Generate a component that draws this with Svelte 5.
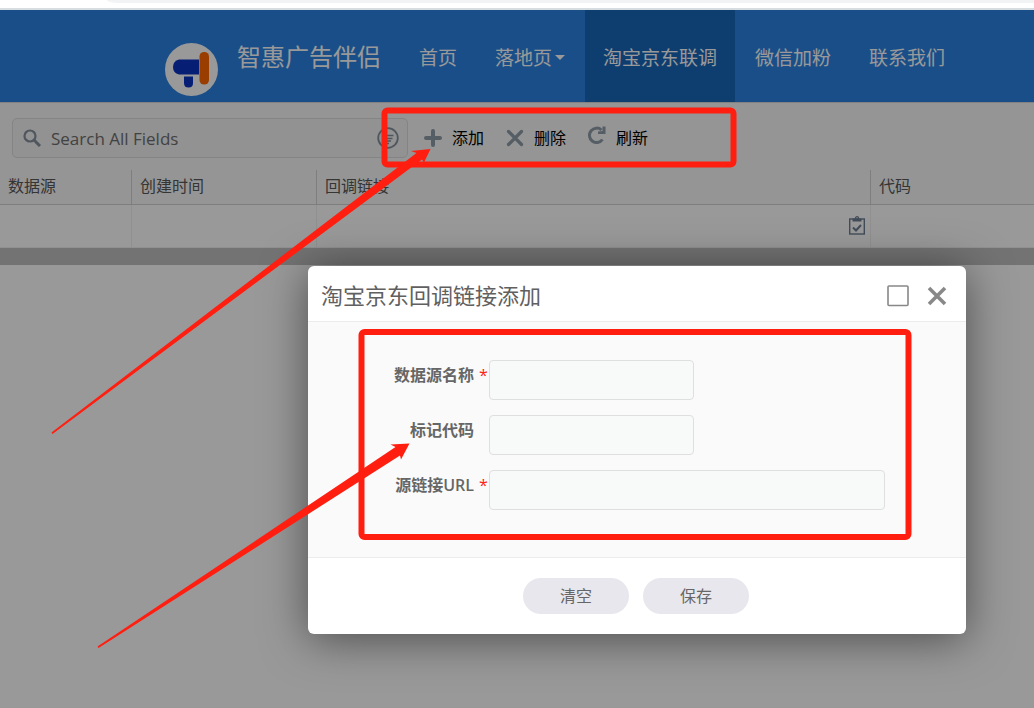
<script lang="ts">
  const links = [
    { text: '首页' },
    { text: '落地页', caret: true },
    { text: '淘宝京东联调', active: true },
    { text: '微信加粉' },
    { text: '联系我们' }
  ]

  const columns = ['数据源', '创建时间', '回调链接', '代码']

  const fields = [
    { id: 'source-name', label: '数据源名称', required: true },
    { id: 'mark-code', label: '标记代码' },
    { id: 'source-url', label: '源链接URL', required: true, wide: true }
  ]

  let values = $state<Record<string, string>>({ 'source-name': '', 'mark-code': '', 'source-url': '' })
  let search = $state('')

  function clear() {
    for (const field of fields) values[field.id] = ''
  }
</script>

<div class="screen">
  <div class="browser"><div class="address"></div></div>

  <div class="page">
    <header>
      <svg class="logo" viewBox="0 0 53 53" aria-hidden="true">
        <circle cx="26.500" cy="26.500" r="26.500" fill="#fff" />
        <path d="M34 16.500H14Q8 18 8 24Q8 30 14 31.500H34Z" fill="#0d33c4" />
        <path d="M19 33.500H28V40Q28 44.500 23.500 44.500Q19 44.500 19 40Z" fill="#0d33c4" />
        <rect x="34.500" y="9" width="9.500" height="32.500" rx="4.500" fill="#ff6600" />
      </svg>
      <h1>智惠广告伴侣</h1>
      <nav>
        {#each links as link}
          <a href="#top" class:active={link.active}>
            {link.text}{#if link.caret}<span class="caret"></span>{/if}
          </a>
        {/each}
      </nav>
    </header>

    <div class="toolbar">
      <div class="search">
        <svg width="18" height="18" viewBox="0 0 18 18" fill="none" stroke="#84909c"><circle cx="7" cy="7" r="5.500" stroke-width="2.200" /><path d="M11 11l6 6" stroke-width="3" /></svg>
        <input type="text" aria-label="Search All Fields" placeholder="Search All Fields" bind:value={search} />
        <svg width="22" height="22" viewBox="0 0 22 22" fill="none" stroke="#84909c" stroke-width="1.800"><circle cx="11" cy="11" r="9.800" /><path d="M5.500 8.500h11M7.500 11.500h8M9 14h5M10 16.500h2" stroke-width="1.500" /></svg>
      </div>
      <button type="button">
        <svg width="18" height="18" viewBox="0 0 18 18" fill="none" stroke="#8e9ba8" stroke-width="4" stroke-linecap="round"><path d="M9 2v14M2 9h14" /></svg>
        添加
      </button>
      <button type="button">
        <svg width="18" height="18" viewBox="0 0 18 18" fill="none" stroke="#8e9ba8" stroke-width="3.200" stroke-linecap="round"><path d="M2.500 2.500l13 13M15.500 2.500l-13 13" /></svg>
        删除
      </button>
      <button type="button">
        <svg class="refresh" width="18" height="18" viewBox="0 0 18 18"><path d="M14.500 13.500A7.200 7.200 0 1 1 13.500 4" fill="none" stroke="#8e9ba8" stroke-width="3" /><path d="M17.500 0.500V8H10V5.500L14.500 5V0.500Z" fill="#8e9ba8" /></svg>
        刷新
      </button>
    </div>

    <table>
      <colgroup><col class="c1" /><col class="c2" /><col class="c3" /><col /></colgroup>
      <thead>
        <tr>
          {#each columns as column}<th>{column}</th>{/each}
        </tr>
      </thead>
      <tbody>
        <tr>
          <td></td>
          <td></td>
          <td>
            <button type="button" class="copy" aria-label="复制">
              <svg width="16" height="19" viewBox="0 0 16 19" fill="none" stroke="#6f7f95"><rect x="0.700" y="3" width="14.600" height="15" stroke-width="1.400" /><path d="M3.500 2.500h9v3h-9z" fill="#6f7f95" stroke="none" /><circle cx="8" cy="2.200" r="1.500" stroke-width="1.300" /><path d="M4 11.500l3 3 5-5.500" stroke-width="2" /></svg>
            </button>
          </td>
          <td></td>
        </tr>
      </tbody>
    </table>
    <div class="scrollbar"></div>

    <div class="overlay">
      <div class="dialog" role="dialog" aria-labelledby="dialog-title">
        <div class="dialog-head">
          <h2 id="dialog-title">淘宝京东回调链接添加</h2>
          <button type="button" aria-label="最大化">
            <svg width="22" height="22" viewBox="0 0 22 22" fill="none" stroke="#888"><rect x="1" y="1" width="20" height="19.500" rx="1" stroke-width="1.600" /></svg>
          </button>
          <button type="button" aria-label="关闭">
            <svg width="20" height="20" viewBox="0 0 20 20" fill="none" stroke="#888" stroke-width="3.600"><path d="M2 2l16 16M18 2L2 18" /></svg>
          </button>
        </div>
        <form id="link-form">
          {#each fields as field}
            <div class="field">
              <label for={field.id}>{field.label}</label>
              <span class="star">{field.required ? '*' : ''}</span>
              <input type="text" id={field.id} class:wide={field.wide} bind:value={values[field.id]} />
            </div>
          {/each}
        </form>
        <div class="dialog-foot">
          <button type="button" onclick={clear}>清空</button>
          <button type="button">保存</button>
        </div>
      </div>
    </div>
  </div>

  <svg class="marks" aria-hidden="true">
    <g fill="none" stroke="#ff1e10" stroke-width="6">
      <rect x="384.500" y="110.500" width="349" height="54" rx="3" />
      <rect x="361.500" y="332" width="547" height="205" rx="3" />
    </g>
    <g fill="#ff1e10">
      <path d="M51.500 432.500L416.500 153L411 151L430.500 149L424 162.500L422 159.500L52.500 434Z" />
      <path d="M97.500 646.500L395.500 447L390.500 444.500L409.500 443.500L401 459.500L400 455.500L98.500 648Z" />
    </g>
  </svg>
</div>

<style>
  :global(body) {
    margin: 0;
    background: #fff;
  }

  .screen {
    position: relative;
    display: flex;
    flex-direction: column;
    min-height: 100vh;
    overflow: hidden;
    font-family: 'Open Sans', 'Noto Sans CJK SC', sans-serif;
    font-size: 16px;
  }

  button,
  input {
    font: inherit;
    box-sizing: border-box;
  }

  button {
    border: 0;
    padding: 0;
    background: none;
    cursor: pointer;
  }

  svg {
    display: block;
    flex: none;
  }

  .browser {
    height: 8px;
    border-bottom: 2px solid #d6dee1;
  }

  .address {
    height: 3px;
    margin-left: 107px;
    background: #f1f3f4;
    border-bottom-left-radius: 12px 3px;
  }

  .page {
    position: relative;
    flex: 1;
  }

  header {
    display: flex;
    height: 92px;
    padding-left: 165px;
    background: #2b83e4;
    color: #fff;
  }

  .logo {
    width: 53px;
    height: 53px;
    margin-top: 33px;
  }

  h1 {
    width: 164px;
    margin: 0 0 0 19px;
    font-size: 24px;
    font-weight: 400;
    line-height: 94px;
    white-space: nowrap;
  }

  nav {
    display: flex;
    gap: 2px;
  }

  nav a {
    display: flex;
    align-items: center;
    box-sizing: border-box;
    height: 92px;
    padding: 2px 18px 0;
    color: #fff;
    font-size: 19px;
    white-space: nowrap;
    text-decoration: none;
  }

  nav a.active {
    background: #1866bb;
  }

  .caret {
    margin-left: 3px;
    border: 5px solid transparent;
    border-top-color: #fff;
    border-bottom: 0;
  }

  .toolbar {
    display: flex;
    align-items: center;
    gap: 22px;
    height: 67px;
    padding-left: 12px;
    border-top: 1px solid #d8d8d8;
    background: #f8f8f8;
  }

  .toolbar button {
    display: flex;
    align-items: center;
    gap: 10px;
    padding-top: 2px;
    line-height: 24px;
    color: #000;
  }

  .toolbar .search {
    display: flex;
    align-items: center;
    box-sizing: border-box;
    width: 396px;
    height: 40px;
    margin: 3px -6px 0 0;
    padding: 0 8px 0 10px;
    border: 1px solid #dcdcdc;
    border-radius: 5px;
    background: #f3f3f3;
  }

  .search input {
    flex: 1;
    min-width: 0;
    padding: 0 10px;
    border: 0;
    outline: 0;
    background: none;
    font-size: 17px;
  }

  .search input::placeholder {
    color: #6f6f6f;
    opacity: 1;
  }

  .refresh {
    margin-bottom: 6px;
  }

  table {
    width: 100%;
    table-layout: fixed;
    border-collapse: separate;
    border-spacing: 0;
    background: #fff;
  }

  .c1 {
    width: 132px;
  }

  .c2 {
    width: 185px;
  }

  .c3 {
    width: 554px;
  }

  th,
  td {
    box-sizing: border-box;
    border-right: 1px solid #d2d2d2;
  }

  th {
    height: 35px;
    padding: 0 8px 2px;
    border-bottom: 1px solid #d2d2d2;
    background: #f8f8f8;
    color: #595959;
    font-weight: 400;
    line-height: 24px;
    text-align: left;
  }

  td {
    height: 43px;
    padding: 0 5px 2px;
    border-right-color: #f0f0f0;
    border-bottom: 1px solid #f0f0f0;
  }

  th:last-child,
  td:last-child {
    border-right: 0;
  }

  .copy {
    display: block;
    margin-left: auto;
  }

  .scrollbar {
    height: 17px;
    background: #c0c0c0;
  }

  .overlay {
    position: absolute;
    inset: 0;
    padding: 256px 68px 0 308px;
    background: rgba(0, 0, 0, 0.4);
  }

  .dialog {
    border-radius: 6px;
    background: #fff;
    box-shadow: 0 5px 45px rgba(0, 0, 0, 0.5);
  }

  .dialog-head {
    display: flex;
    align-items: center;
    gap: 18px;
    height: 55px;
    padding: 0 19px 0 13px;
    border-bottom: 1px solid #ececec;
  }

  .dialog-head button {
    margin-top: 5px;
  }

  h2 {
    flex: 1;
    margin: 2px 0 0;
    color: #606060;
    font-size: 22px;
    font-weight: 400;
    line-height: 32px;
  }

  form {
    display: flex;
    flex-direction: column;
    gap: 15px;
    padding: 38px 81px 47px 20px;
    border-bottom: 1px solid #ececec;
    background: #fafafa;
  }

  .field {
    display: flex;
  }

  .field label {
    width: 146px;
    color: #666;
    font-weight: 600;
    line-height: 30px;
    text-align: right;
  }

  .star {
    width: 10px;
    padding-left: 5px;
    color: #ff1e10;
    line-height: 30px;
  }

  .field input {
    width: 205px;
    height: 40px;
    padding: 0 8px;
    border: 1px solid #dedfde;
    border-radius: 4px;
    background: #f8faf9;
  }

  .field input.wide {
    flex: 1;
    width: auto;
  }

  .dialog-foot {
    display: flex;
    justify-content: center;
    gap: 14px;
    padding: 20px 2px 20px 0;
  }

  .dialog-foot button {
    width: 106px;
    height: 36px;
    padding-bottom: 2px;
    border-radius: 18px;
    background: #e8e7ed;
    color: #666;
  }

  .marks {
    position: absolute;
    inset: 0;
    width: 100%;
    height: 100%;
    pointer-events: none;
  }
</style>
